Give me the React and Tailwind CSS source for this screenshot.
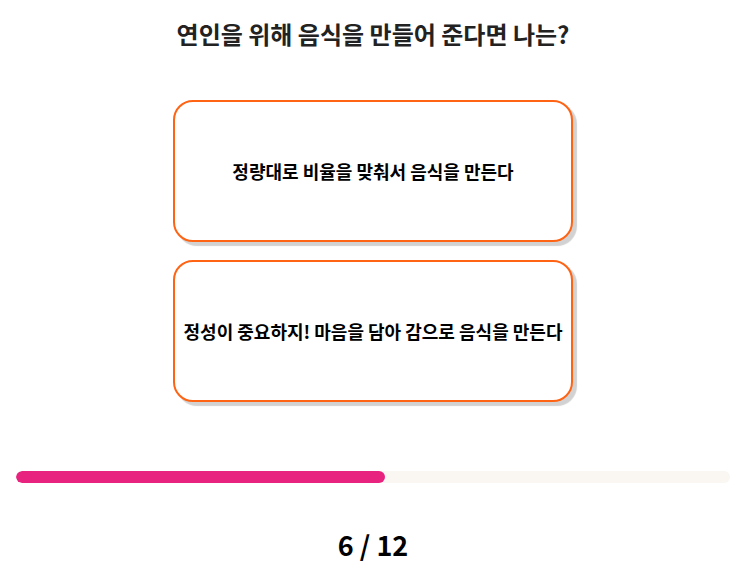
import { useState } from "react";

const question = {
  title: "연인을 위해 음식을 만들어 준다면 나는?",
  answers: ["정량대로 비율을 맞춰서 음식을 만든다", "정성이 중요하지! 마음을 담아 감으로 음식을 만든다"],
};

export default function App() {
  const [step] = useState(6);
  const total = 12;

  return (
    <div
      className="w-full min-h-screen bg-white flex flex-col items-center"
      style={{ fontFamily: '"Noto Sans CJK KR", "Noto Sans", sans-serif' }}
    >
      <h1 className="pt-[18px] text-[24px] leading-[32px] font-bold text-[#222]">{question.title}</h1>

      <div className="mt-[50px] w-[400px] flex flex-col gap-[18px]">
        {question.answers.map((a) => (
          <button
            key={a}
            className="h-[142px] w-full rounded-[20px] border-2 border-[#ff6314] bg-white shadow-[4px_4px_1px_#d2d2d2] flex items-center justify-center px-1 text-[18px] font-bold text-black cursor-pointer"
          >
            {a}
          </button>
        ))}
      </div>

      <div className="mt-[69px] w-full px-4">
        <div className="h-3 w-full rounded-full bg-[#faf7f3] overflow-hidden">
          <div className="h-full rounded-full bg-[#e8237f]" style={{ width: `${(369 / 714) * 100}%` }} />
        </div>
      </div>

      <div className="mt-[46px] text-[27px] leading-[32px] font-bold text-black">
        {step} / {total}
      </div>
    </div>
  );
}
